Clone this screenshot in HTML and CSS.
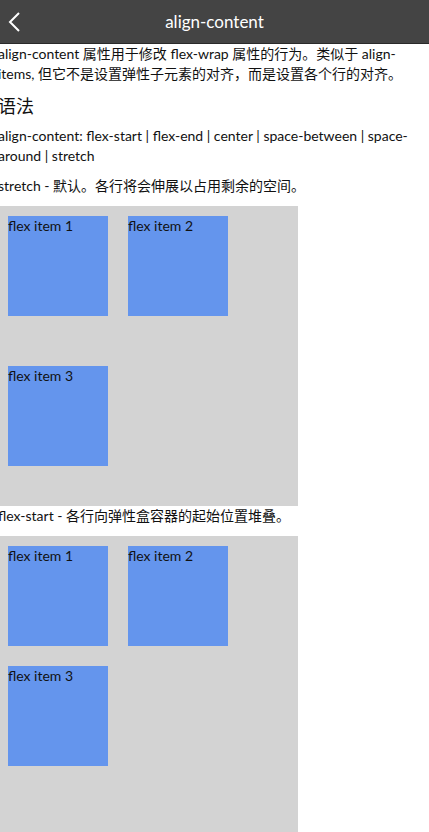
FILE: index.html
```html
<!DOCTYPE html>
<html>
<head>
<meta charset="utf-8">
<link rel="stylesheet" href="styles.css">
</head>
<body>
<header class="bar">
  <svg class="back" width="16" height="24" viewBox="0 0 16 24"><polyline points="11,3 2,12 11,21" fill="none" stroke="#fff" stroke-width="2"/></svg>
  <div class="title">align-content</div>
</header>
<main class="content">
  <p class="intro">align-content 属性用于修改 flex-wrap 属性的行为。类似于 align-items, 但它不是设置弹性子元素的对齐，而是设置各个行的对齐。</p>
  <h2 class="h">语法</h2>
  <p class="syntax">align-content: flex-start | flex-end | center | space-between | space-around | stretch</p>
  <p class="desc">stretch - 默认。各行将会伸展以占用剩余的空间。</p>
  <div class="box stretch">
    <div class="item">flex item 1</div>
    <div class="item">flex item 2</div>
    <div class="item">flex item 3</div>
  </div>
  <p class="desc">flex-start - 各行向弹性盒容器的起始位置堆叠。</p>
  <div class="box start">
    <div class="item">flex item 1</div>
    <div class="item">flex item 2</div>
    <div class="item">flex item 3</div>
  </div>
</main>
</body>
</html>
```
FILE: styles.css
```css
html, body { margin: 0; padding: 0; background: #fff; }
body { font-family: Lato, "Noto Sans CJK SC", sans-serif; color: #111; overflow: hidden; height: 832px; }
.bar { height: 43px; background: #444; border-bottom: 1px solid #2a2a2a; display: flex; align-items: center; justify-content: center; position: relative; }
.back { position: absolute; left: 8px; top: 10px; }
.title { color: #fff; font-size: 17px; }
.content { margin-left: -2px; width: 412px; font-size: 14px; line-height: 20px; }
.intro { margin: 0; }
.h { font-size: 18px; font-weight: normal; margin: 10px 0 8px; line-height: 24px; }
.syntax { margin: 0 0 10px; }
.desc { margin: 0 0 10px; }
.box { width: 300px; height: 300px; background: #d3d3d3; display: flex; flex-wrap: wrap; }
.stretch { align-content: stretch; }
.start { align-content: flex-start; }
.item { width: 100px; height: 100px; margin: 10px; background: #6495ed; line-height: 20px; font-size: 14px; }
```
